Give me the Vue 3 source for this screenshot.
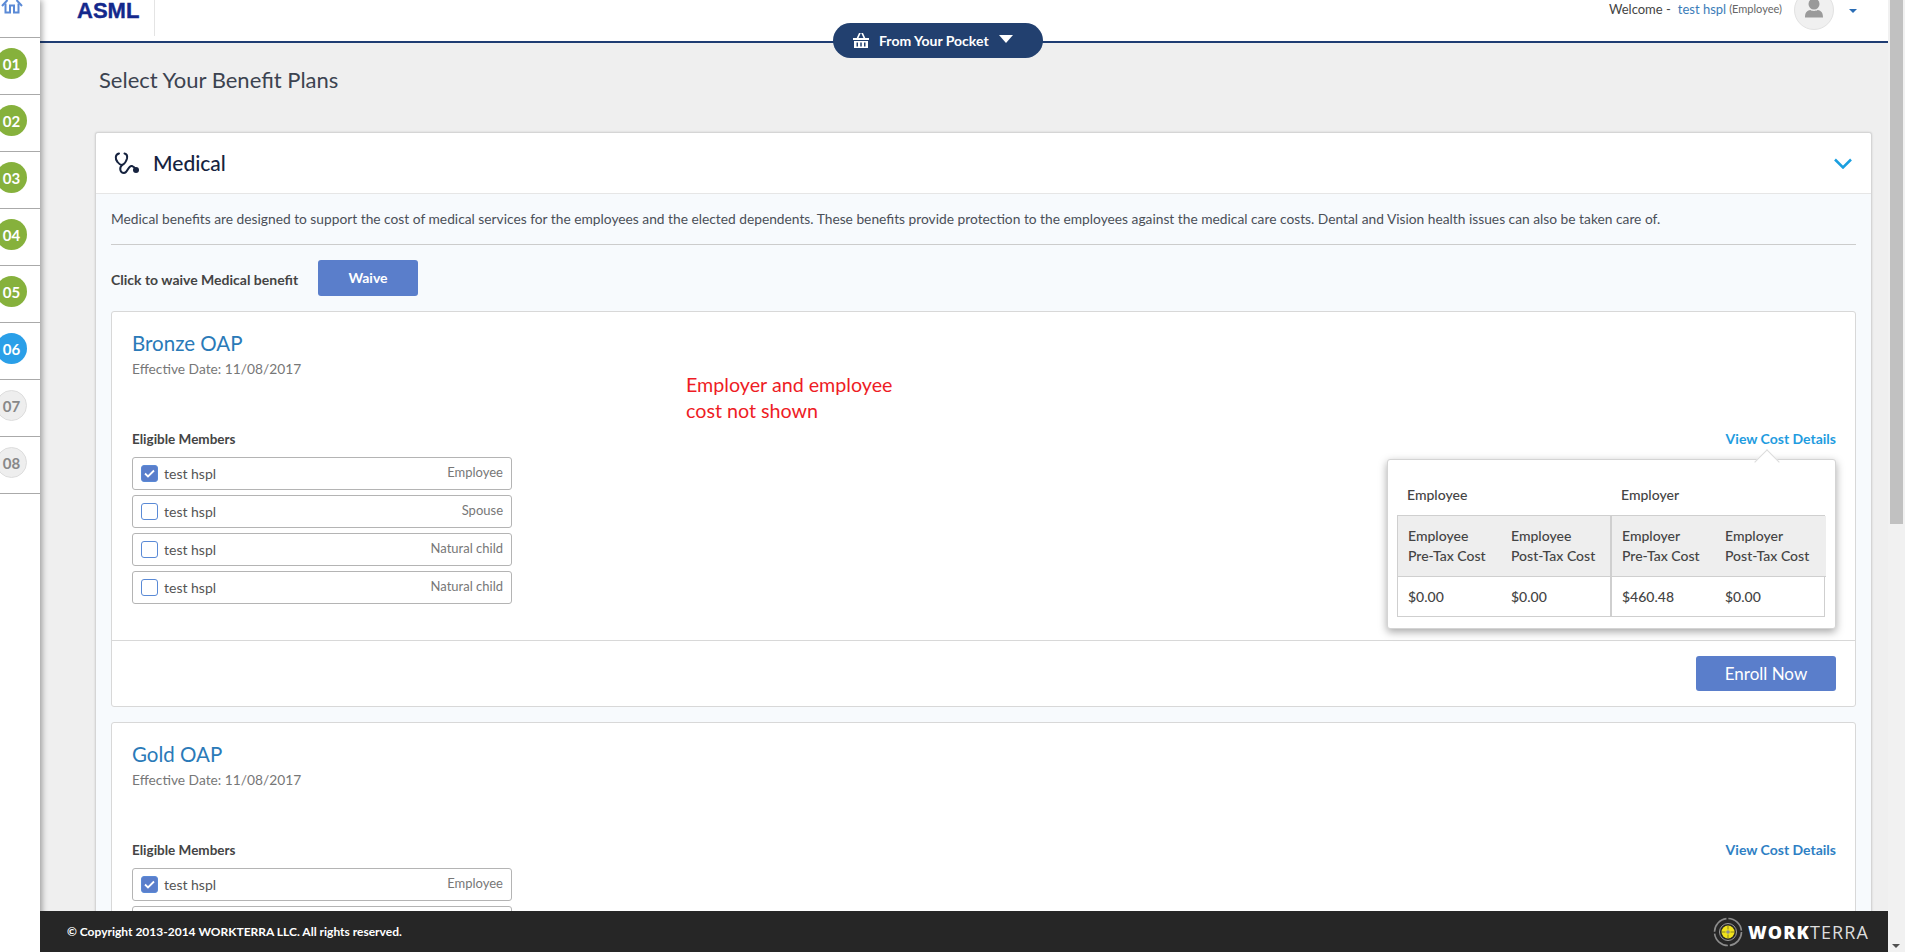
<template>
  <div class="page">
    <aside class="sidebar">
      <div class="home-row">
        <svg class="home-icon" width="24" height="14" viewBox="0 0 24 14" fill="none" stroke="#5b8ad6" stroke-width="2">
          <path d="M2 6 7.500 0M22 6 16.500 0" />
          <path d="M5.500 3.500V12.500H10V5.500h4v7h4.500V3.500" />
        </svg>
      </div>
      <div v-for="step in steps" :key="step.num" class="step">
        <span class="step-num" :class="step.state">{{ step.num }}</span>
      </div>
    </aside>

    <main class="main">
      <header class="topbar">
        <div class="logo-box"><span class="logo">ASML</span></div>
        <div class="user">
          <span class="welcome">Welcome -</span>
          <a class="user-name">test hspl</a>
          <span class="user-role">(Employee)</span>
          <span class="avatar">
            <svg width="20" height="20" viewBox="0 0 20 20" fill="#9a9a9a">
              <circle cx="10" cy="6" r="5.500" />
              <path d="M1 19.500c0-4.500 1.500-6.800 5.500-7.500 1 1.200 6 1.200 7 0 4 .7 5.500 3 5.500 7.500z" />
            </svg>
          </span>
          <span class="user-caret"></span>
        </div>
      </header>

      <button class="pocket" type="button">
        <svg width="16" height="15" viewBox="0 0 16 15" fill="#fff">
          <path d="M0 5h16v2H0zM1 8h14v7H1z" />
          <path d="M6 0h1.800L5.500 5H3.700zM8.200 0H10l2.300 5h-1.800z" />
          <path d="M3.500 9.500h1.500v4H3.500zM7.250 9.500h1.500v4h-1.500zM11 9.500h1.500v4H11z" fill="#22406f" />
        </svg>
        <span>From Your Pocket</span>
        <span class="pocket-caret"></span>
      </button>

      <div class="content">
        <h1 class="page-title">Select Your Benefit Plans</h1>

        <section class="benefit">
          <div class="benefit-head">
            <svg width="26" height="26" viewBox="0 0 26 26" fill="none" stroke="#16233f" stroke-width="2" stroke-linecap="round">
              <path d="M5 3.500C1 4.500 1 9 3.500 12 5 14 7 15 8 15 9.500 14.500 12 12 13 8.500 13.500 6 12.500 4 10.500 3.500" />
              <path d="M8 15C5 18 6 23 10 23 14 23 14 15 18 16 20 16.500 21 18 22 20" />
              <circle cx="22" cy="20" r="3" fill="#16233f" stroke="none" />
            </svg>
            <h2>Medical</h2>
            <svg class="chevron" width="18" height="11" viewBox="0 0 18 11" fill="none" stroke="#1a9fe0" stroke-width="2.500">
              <path d="M1 1.500l8 8 8-8" />
            </svg>
          </div>

          <div class="benefit-body">
            <p class="intro">Medical benefits are designed to support the cost of medical services for the employees and the elected dependents. These benefits provide protection to the employees against the medical care costs. Dental and Vision health issues can also be taken care of.</p>
            <hr class="rule" />
            <div class="waive-row">
              <span class="waive-label">Click to waive Medical benefit</span>
              <button class="waive-btn" type="button">Waive</button>
            </div>

            <article v-for="plan in plans" :key="plan.name" class="plan">
              <div class="plan-body">
                <h3 class="plan-name">{{ plan.name }}</h3>
                <div class="plan-date">Effective Date: 11/08/2017</div>
                <div class="members-head">
                  <span class="members-title">Eligible Members</span>
                  <a class="cost-link" :class="{ active: plan.showCost }">View Cost Details</a>
                </div>
                <div class="members">
                  <label v-for="(m, i) in members" :key="i" class="member">
                    <span class="check" :class="{ on: m.checked }">
                      <svg v-if="m.checked" width="11" height="9" viewBox="0 0 11 9" fill="none" stroke="#fff" stroke-width="1.800">
                        <path d="M1 4.500l3 3 6-6" />
                      </svg>
                    </span>
                    <span class="member-name">test hspl</span>
                    <span class="member-rel">{{ m.rel }}</span>
                  </label>
                </div>
              </div>
              <div class="plan-foot">
                <button class="enroll" type="button">Enroll Now</button>
              </div>

              <template v-if="plan.showCost">
                <p class="note">Employer and employee<br />cost not shown</p>
                <div class="cost-pop">
                  <div class="cost-groups">
                    <span>Employee</span>
                    <span>Employer</span>
                  </div>
                  <div class="cost-table">
                    <div
                      v-for="(c, i) in costs"
                      :key="c.head + c.sub"
                      class="cost-head"
                      :class="{ split: i === 1 }"
                    >{{ c.head }}<br />{{ c.sub }}</div>
                    <div
                      v-for="(c, i) in costs"
                      :key="c.sub + c.head"
                      class="cost-val"
                      :class="{ split: i === 1 }"
                    >{{ c.val }}</div>
                  </div>
                </div>
              </template>
            </article>
          </div>
        </section>
      </div>

      <footer class="footer">
        <span class="copy">© Copyright 2013-2014 WORKTERRA LLC. All rights reserved.</span>
        <div class="brand">
          <svg width="30" height="30" viewBox="0 0 30 30" fill="none">
            <circle cx="15" cy="15" r="13.500" stroke="#8c8c8c" stroke-width="1.600" stroke-dasharray="19.200 2" />
            <circle cx="15" cy="15" r="8.500" stroke="#9a9a9a" stroke-width="1" />
            <circle cx="15" cy="15" r="6.500" fill="#f0e21c" />
            <path d="M15 9v3.500M15 17.500V21M9 15h3.500M17.500 15H21" stroke="#8a8420" stroke-width="1" />
            <circle cx="15" cy="15" r="1.800" fill="#8c8c8c" />
          </svg>
          <span class="brand-name"><b>WORK</b>TERRA</span>
        </div>
      </footer>
    </main>

    <div class="scrollbar">
      <div class="scroll-thumb"></div>
      <span class="scroll-arrow"></span>
    </div>
    <div class="edge"></div>
  </div>
</template>

<script setup>
const steps = [
  { num: '01', state: 'done' },
  { num: '02', state: 'done' },
  { num: '03', state: 'done' },
  { num: '04', state: 'done' },
  { num: '05', state: 'done' },
  { num: '06', state: 'current' },
  { num: '07', state: 'todo' },
  { num: '08', state: 'todo' }
]

const plans = [
  { name: 'Bronze OAP', showCost: true },
  { name: 'Gold OAP', showCost: false }
]

const members = [
  { rel: 'Employee', checked: true },
  { rel: 'Spouse', checked: false },
  { rel: 'Natural child', checked: false },
  { rel: 'Natural child', checked: false }
]

const costs = [
  { head: 'Employee', sub: 'Pre-Tax Cost', val: '$0.00' },
  { head: 'Employee', sub: 'Post-Tax Cost', val: '$0.00' },
  { head: 'Employer', sub: 'Pre-Tax Cost', val: '$460.48' },
  { head: 'Employer', sub: 'Post-Tax Cost', val: '$0.00' }
]
</script>

<style>
html,
body {
  margin: 0;
  overflow: hidden;
}
</style>

<style scoped>
.page {
  display: flex;
  width: 1920px;
  height: 952px;
  overflow: hidden;
  background: #fff;
  font-family: Lato, "Open Sans", sans-serif;
  font-size: 13.78px;
  color: #444;
}

/* left steps */
.sidebar {
  flex: 0 0 40px;
  background: #fff;
  box-shadow: 2px 0 6px rgba(0, 0, 0, 0.35);
  position: relative;
  z-index: 3;
}

.home-row {
  height: 37px;
  border-bottom: 1px solid #aaa;
}

.home-icon {
  display: block;
}

.step {
  height: 51px;
  padding-bottom: 5px;
  border-bottom: 1px solid #aaa;
  display: flex;
  align-items: center;
}

.step-num {
  flex: none;
  width: 31px;
  height: 31px;
  margin-left: -4px;
  border-radius: 50%;
  display: flex;
  align-items: center;
  justify-content: center;
  font-size: 15px;
  font-weight: 700;
  color: #fff;
  box-sizing: border-box;
}

.step-num.done {
  background: #86b13c;
}

.step-num.current {
  background: #2a9fe8;
}

.step-num.todo {
  background: #eee;
  border: 1px solid #ddd;
  color: #888;
}

/* main column */
.main {
  flex: 0 0 1848px;
  position: relative;
  display: flex;
  flex-direction: column;
  overflow: hidden;
  background: #efefef;
}

.topbar {
  flex: none;
  height: 41px;
  background: #fff;
  border-bottom: 2px solid #1f3d73;
  display: flex;
  justify-content: space-between;
}

.logo-box {
  width: 77px;
  height: 36px;
  border-right: 1px solid #e4e4e4;
  padding-left: 37px;
}

.logo {
  display: block;
  font-family: "Liberation Sans", sans-serif;
  font-weight: 700;
  font-size: 22px;
  line-height: 22px;
  color: #14288c;
  -webkit-text-stroke: 0.4px #14288c;
}

.user {
  display: flex;
  align-items: flex-start;
  padding-right: 31px;
  font-size: 13px;
  line-height: 18px;
  white-space: nowrap;
}

.welcome {
  color: #444;
}

.user-name {
  margin-left: 7px;
  color: #3b7cb8;
}

.user-role {
  margin-left: 3px;
  font-size: 11px;
  color: #666;
}

.avatar {
  width: 40px;
  height: 40px;
  margin: -10px 0 0 12px;
  border-radius: 50%;
  background: #f0f0f0;
  border: 1px solid #e2e2e2;
  box-sizing: border-box;
  display: flex;
  align-items: flex-start;
  justify-content: center;
  overflow: hidden;
  padding-top: 7px;
}

.user-caret {
  width: 0;
  height: 0;
  margin: 9px 0 0 15px;
  border-left: 4px solid transparent;
  border-right: 4px solid transparent;
  border-top: 4px solid #2a6db5;
}

.pocket {
  position: absolute;
  top: 23px;
  left: 793px;
  width: 210px;
  height: 35px;
  z-index: 2;
  border: 0;
  border-radius: 18px;
  background: #22406f;
  color: #fff;
  font: 700 14px Lato, sans-serif;
  display: flex;
  align-items: center;
  padding: 0 0 0 20px;
  gap: 10px;
}

.pocket-caret {
  width: 0;
  height: 0;
  margin: -3px 0 0 0;
  border-left: 7.5px solid transparent;
  border-right: 7.5px solid transparent;
  border-top: 8px solid #fff;
}

.content {
  flex: 1;
  padding: 25px 16px 0 55px;
}

.page-title {
  margin: 0 0 40px 4px;
  font-size: 22px;
  font-weight: 400;
  line-height: 24px;
  color: #3c4350;
}

.benefit {
  background: #f7fafd;
  border: 1px solid #d5d5d5;
  border-radius: 3px;
  box-shadow: 0 0 2px rgba(0, 0, 0, 0.15);
}

.benefit-head {
  height: 60px;
  background: #fff;
  border-bottom: 1px solid #e6e6e6;
  display: flex;
  align-items: center;
  padding: 0 19px 0 18px;
  border-radius: 3px 3px 0 0;
}

.benefit-head h2 {
  margin: -2px 0 0 13px;
  font-size: 21px;
  font-weight: 500;
  color: #16233f;
}

.chevron {
  margin-left: auto;
}

.benefit-body {
  padding: 16px 15px 0;
}

.intro {
  margin: 0;
  line-height: 18px;
  color: #4a4f58;
}

.rule {
  margin: 16px 0 15px;
  border: 0;
  border-top: 1px solid #ccc;
}

.waive-row {
  display: flex;
  align-items: center;
  height: 36px;
}

.waive-label {
  width: 207px;
  font-size: 14px;
  font-weight: 700;
  margin-top: 3px;
}

.waive-btn,
.enroll {
  border: 0;
  border-radius: 3px;
  background: #5a7ecb;
  color: #fff;
  font-family: Lato, sans-serif;
}

.waive-btn {
  width: 100px;
  height: 36px;
  padding-bottom: 3px;
  font-size: 14px;
  font-weight: 700;
}

.plan {
  position: relative;
  margin-top: 15px;
  background: #fff;
  border: 1px solid #d8d8d8;
  border-radius: 3px;
}

.plan-body {
  padding: 19px 19px 36px 20px;
  border-bottom: 1px solid #d8d8d8;
}

.plan-name {
  margin: 0;
  font-size: 20.5px;
  font-weight: 400;
  line-height: 24px;
  color: #2a7ab8;
}

.plan-date {
  margin-top: 5px;
  line-height: 18px;
  color: #777;
}

.members-head {
  display: flex;
  justify-content: space-between;
  margin-top: 52px;
  line-height: 18px;
}

.members-title {
  font-size: 13.5px;
  font-weight: 700;
}

.cost-link {
  font-size: 14px;
  font-weight: 700;
  color: #2f7fc4;
}

.cost-link.active {
  color: #1f9ce0;
}

.members {
  display: flex;
  flex-direction: column;
  gap: 5px;
  margin-top: 9px;
  width: 380px;
}

.member {
  height: 33px;
  border: 1px solid #b4b4b4;
  border-radius: 3px;
  box-sizing: border-box;
  display: flex;
  align-items: center;
  padding: 0 8px;
}

.check {
  width: 17px;
  height: 17px;
  box-sizing: border-box;
  border: 1px solid #5a8ad6;
  border-radius: 3px;
  display: flex;
  align-items: center;
  justify-content: center;
}

.check.on {
  background: #5a7ecb;
}

.member-name {
  margin: -1px 0 0 6px;
  font-size: 14px;
  color: #555;
}

.member-rel {
  margin-left: auto;
  margin-top: -3px;
  font-size: 13px;
  color: #777;
}

.plan-foot {
  display: flex;
  justify-content: flex-end;
  padding: 15px 19px;
}

.enroll {
  width: 140px;
  height: 35px;
  font-size: 17px;
}

.note {
  position: absolute;
  left: 574px;
  top: 60px;
  margin: 0;
  font-family: Lato, sans-serif;
  font-size: 19.7px;
  line-height: 26px;
  color: #ee1c25;
}

/* popover under View Cost Details */
.cost-pop {
  position: absolute;
  left: 1275px;
  top: 147px;
  width: 449px;
  height: 170px;
  box-sizing: border-box;
  background: #fff;
  border: 1px solid #d4d4d4;
  border-radius: 3px;
  box-shadow: 0 3px 8px rgba(0, 0, 0, 0.35);
  padding: 26px 9px 0;
}

.cost-pop::before {
  content: "";
  position: absolute;
  top: -7px;
  left: 370px;
  width: 17px;
  height: 17px;
  background: #fff;
  border-top: 1px solid #dcdcdc;
  border-left: 1px solid #dcdcdc;
  transform: rotate(45deg);
}

.cost-groups {
  display: grid;
  grid-template-columns: 214px 214px;
  padding-left: 10px;
  height: 29px;
  line-height: 18px;
  color: #444;
  font-weight: 500;
  font-size: 14px;
}

.cost-table {
  display: grid;
  grid-template-columns: 103px 111px 103px 111px;
  grid-template-rows: 61px 39px;
  width: 428px;
  box-sizing: border-box;
  border: 1px solid #cfcfcf;
  color: #444;
  font-size: 14px;
  font-weight: 500;
}

.cost-head,
.cost-val {
  padding-left: 10px;
  display: flex;
  align-items: center;
}

.cost-head {
  display: block;
  padding-top: 10px;
  background: #eee;
  border-bottom: 1px solid #cfcfcf;
  line-height: 20px;
  box-sizing: border-box;
}

.split {
  border-right: 2px solid #cfcfcf;
}

.footer {
  position: absolute;
  left: 0;
  right: 0;
  bottom: 0;
  height: 41px;
  z-index: 4;
  background: #262626;
  display: flex;
  align-items: center;
  justify-content: space-between;
  padding: 0 19px 0 27px;
}

.copy {
  color: #fff;
  font-size: 12px;
  font-weight: 700;
}

.brand {
  display: flex;
  align-items: center;
  gap: 5px;
}

.brand-name {
  color: #ddd;
  font-family: "Open Sans", sans-serif;
  font-size: 18px;
  letter-spacing: 1.1px;
}

.brand-name b {
  color: #fff;
  font-weight: 800;
}

.scrollbar {
  flex: 0 0 17px;
  background: #f1f1f1;
  position: relative;
  padding: 0 2px;
  box-sizing: border-box;
}

.scroll-thumb {
  height: 524px;
  background: #c1c1c1;
}

.scroll-arrow {
  position: absolute;
  left: 4px;
  bottom: 4px;
  width: 0;
  height: 0;
  border-left: 4px solid transparent;
  border-right: 4px solid transparent;
  border-top: 4px solid #505050;
}

.edge {
  flex: 1;
  background: #fff;
}
</style>
